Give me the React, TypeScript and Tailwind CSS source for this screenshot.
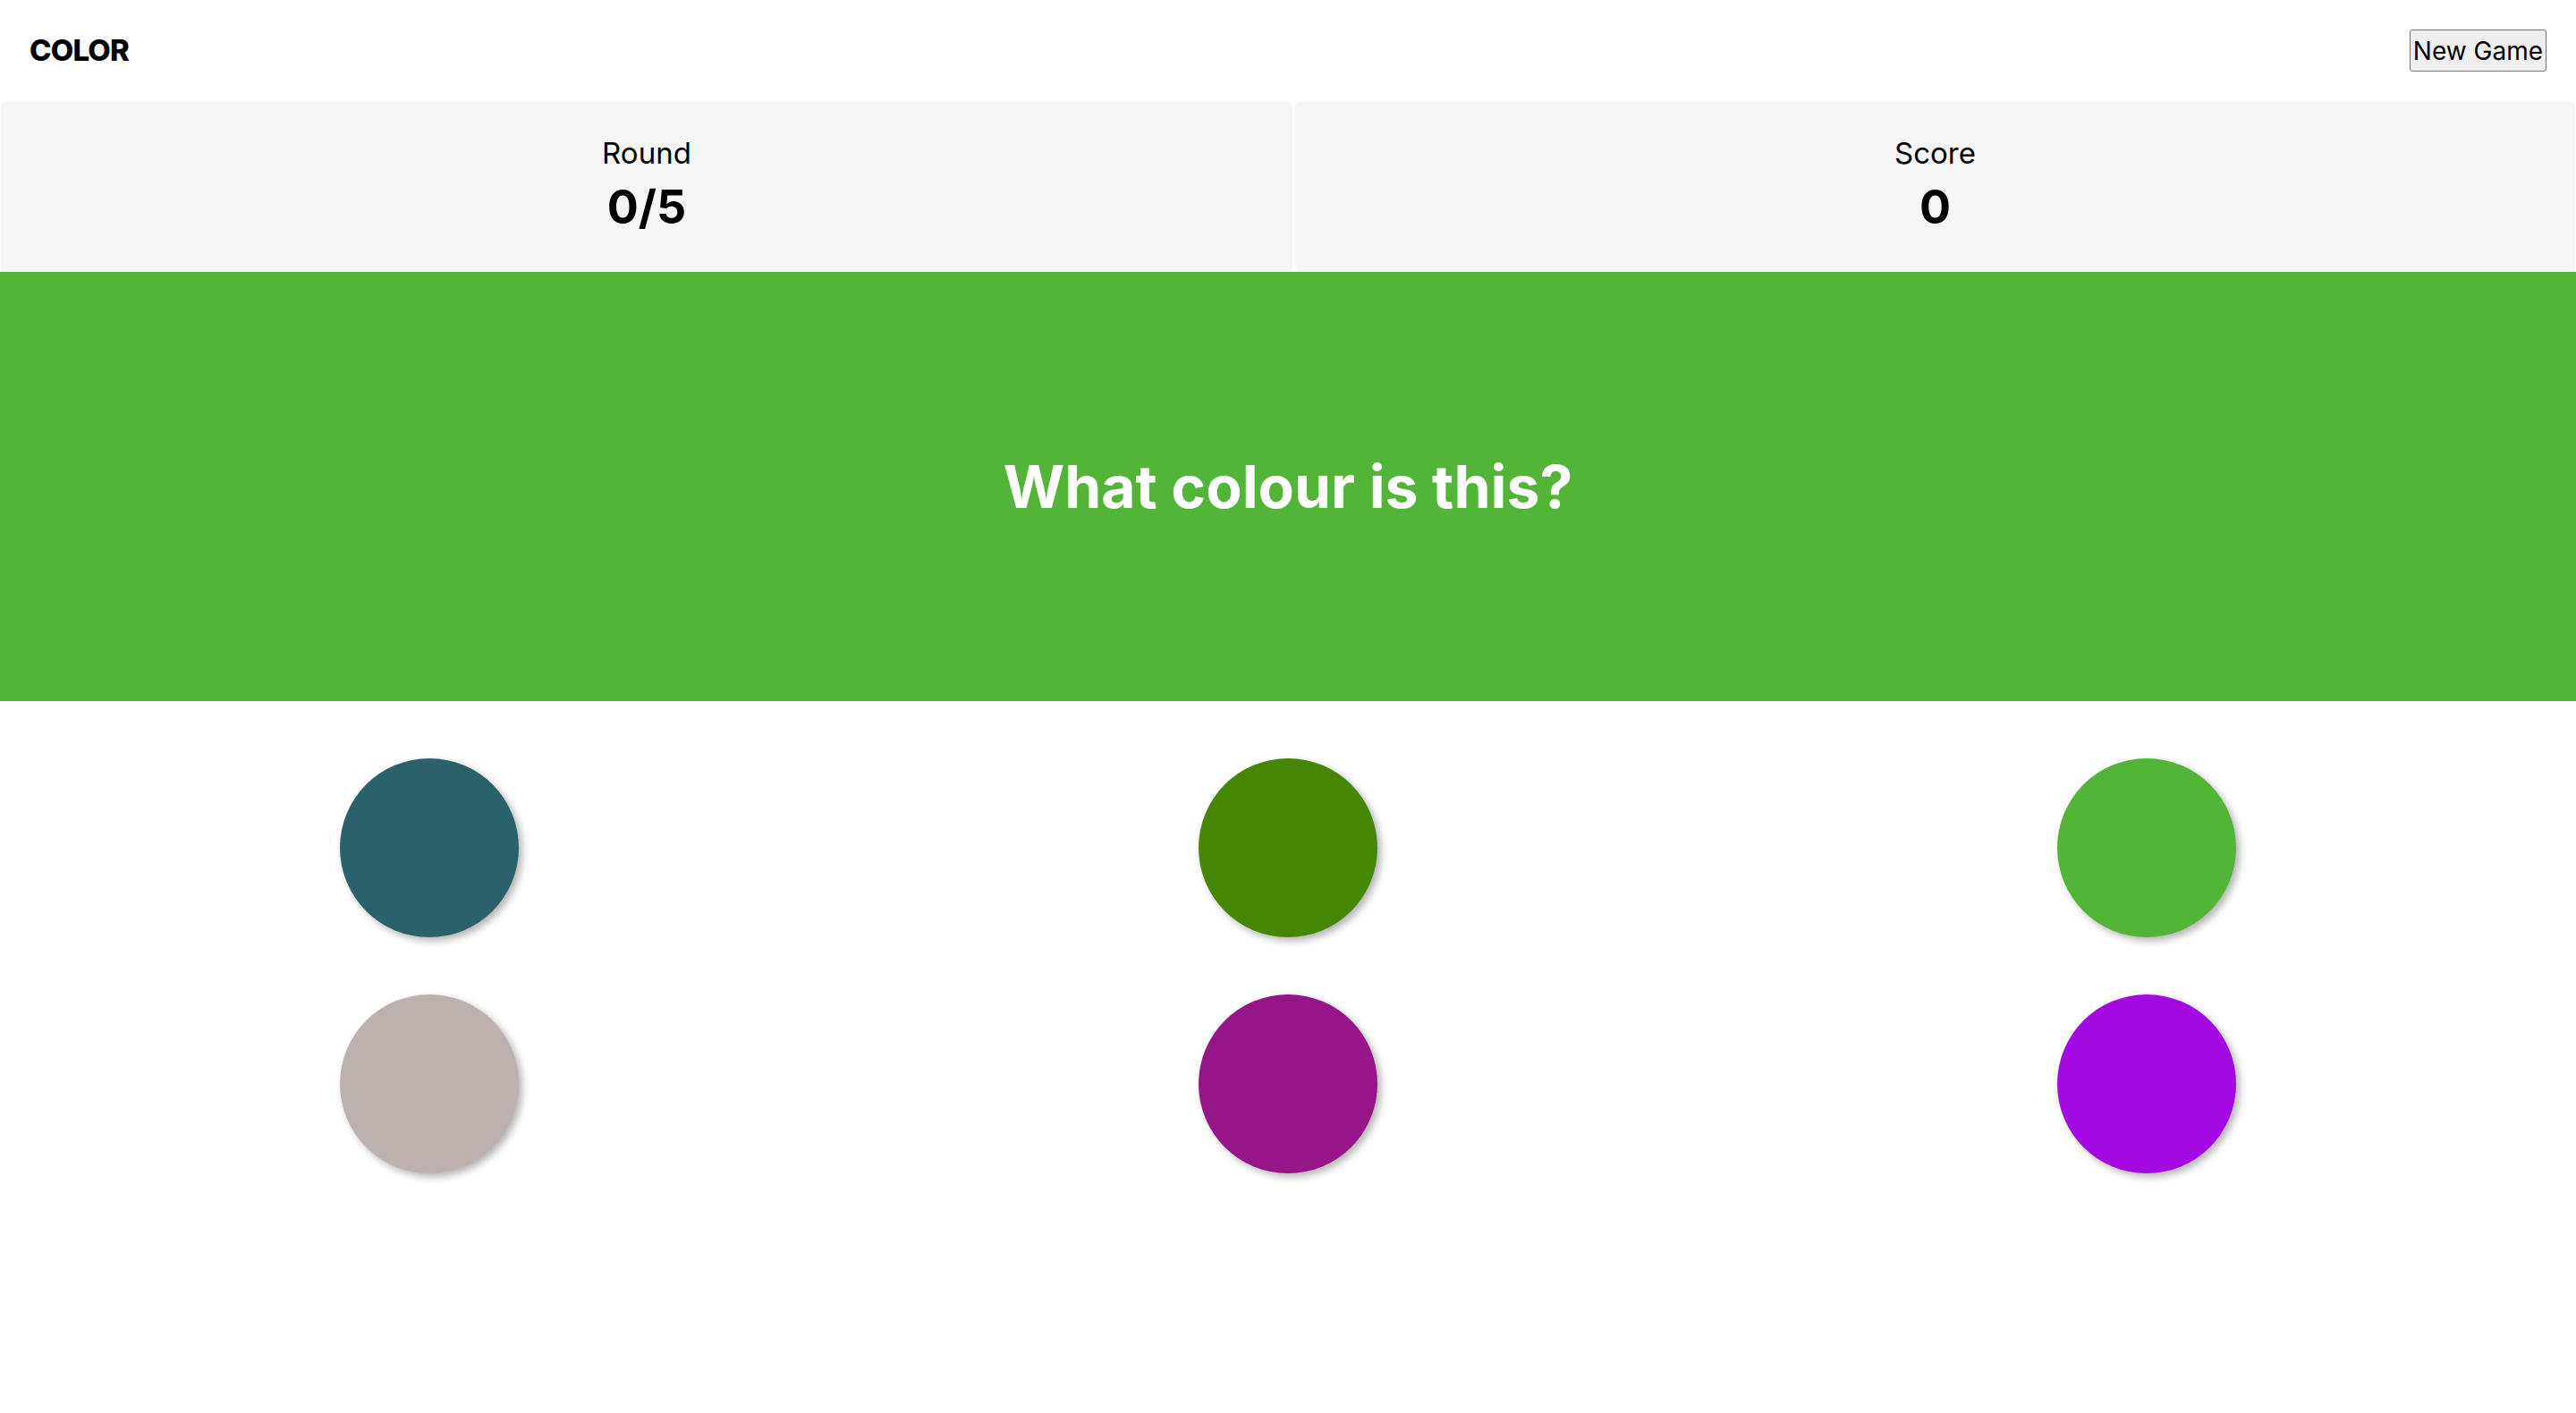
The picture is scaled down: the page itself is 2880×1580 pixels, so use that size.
const CHOICES = ['#2b616b', '#458705', '#52b538', '#bcb1ae', '#961689', '#a309e0']

function Stat({ label, value }: { label: string; value: string }) {
  return (
    <div className="flex flex-col items-center justify-center bg-[#f6f6f6] pb-[5px] shadow-[0_0_4px_rgba(0,0,0,0.12)]">
      <span className="text-[33px] leading-none">{label}</span>
      <span className="mt-[18px] text-[52px] font-bold leading-none">{value}</span>
    </div>
  )
}

export default function App() {
  return (
    <div className="min-h-screen bg-white text-black font-['Inter',sans-serif]">
      <header className="flex h-[113px] items-center justify-between px-[33px]">
        <h1 className="text-[33px] font-extrabold tracking-tight">COLOR</h1>
        <button className="h-[47px] rounded-[3px] border border-[#767676] bg-[#efefef] px-[3px] text-[28px]">
          New Game
        </button>
      </header>

      {/* Round / score */}
      <div className="grid h-[191px] grid-cols-[1440px_1fr] gap-[7px] px-[3px] py-[3px]">
        <Stat label="Round" value="0/5" />
        <Stat label="Score" value="0" />
      </div>

      <section className="flex h-[480px] items-center justify-center bg-[#52b538]">
        <h2 className="text-[66px] font-bold text-white">What colour is this?</h2>
      </section>

      <div className="grid grid-cols-3 gap-y-16 pt-16 pb-16">
        {CHOICES.map(c => (
          <button
            key={c}
            className="h-[200px] w-[200px] justify-self-center rounded-full shadow-[4px_4px_8px_rgba(0,0,0,0.3)]"
            style={{ background: c }}
          />
        ))}
      </div>
    </div>
  )
}
